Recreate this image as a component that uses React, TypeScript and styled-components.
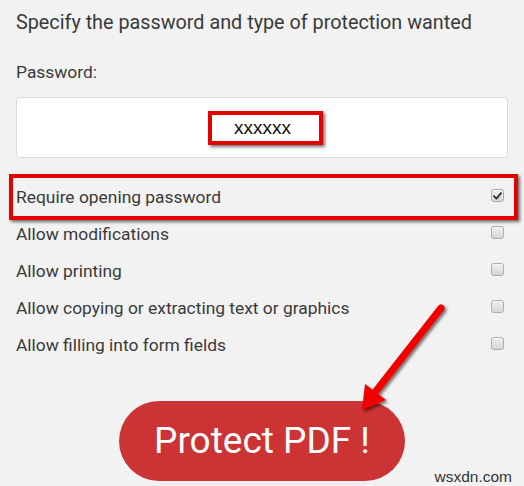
import React from "react";
import styled, { createGlobalStyle } from "styled-components";

const Global = createGlobalStyle`
  html, body { margin: 0; padding: 0; background: #f2f2f2; }
  body { font-family: Roboto, "Noto Sans", sans-serif; color: #333; }
`;

const Page = styled.div`
  position: relative;
  width: 524px;
  height: 486px;
  overflow: hidden;
  background: #f2f2f2;
  padding: 11px 16px 0 16px;
  box-sizing: border-box;
  display: flex;
  flex-direction: column;
`;

const Heading = styled.div`
  font-size: 19.8px;
  line-height: 24px;
  color: #3a3a3a;
  white-space: nowrap;
`;

const Label = styled.div`
  margin-top: 27px;
  font-size: 17.4px;
  line-height: 20px;
  color: #3a3a3a;
`;

const InputBox = styled.div`
  margin-top: 15px;
  height: 61px;
  box-sizing: border-box;
  background: #fff;
  border: 1px solid #d9d9d9;
  border-radius: 4px;
  display: flex;
  align-items: center;
  justify-content: center;
`;

const Marked = styled.span`
  display: inline-flex;
  align-items: center;
  justify-content: center;
  box-sizing: border-box;
  width: 115px;
  height: 34px;
  margin-left: 7px;
  border: 4px solid #e60000;
  box-shadow: 2px 2px 3px rgba(0, 0, 0, 0.55);
  font-family: "Liberation Sans", Arial, sans-serif;
  font-size: 19px;
  color: #111;
  padding-right: 6px;
`;

const Options = styled.div`
  margin-top: 20px;
  display: flex;
  flex-direction: column;
`;

const Row = styled.div<{ $highlight?: boolean }>`
  position: relative;
  height: 37px;
  display: flex;
  align-items: center;
  justify-content: space-between;
  padding-right: 4px;
  font-size: 17.4px;
  color: #3a3a3a;
  ${(p) =>
    p.$highlight &&
    `
    &::after {
      content: "";
      position: absolute;
      left: -7px;
      right: -10px;
      top: -4px;
      bottom: -5px;
      border: 4px solid #e60000;
      box-shadow: 2px 2px 3px rgba(0,0,0,0.55);
      pointer-events: none;
    }
  `}
`;

const Check = styled.span<{ $checked?: boolean }>`
  width: 13px;
  height: 13px;
  box-sizing: border-box;
  border: 1px solid #adadad;
  border-radius: 3px;
  background: linear-gradient(#efefef, #d6d6d6);
  box-shadow: inset 0 1px 1px rgba(255, 255, 255, 0.8), 0 0 1px rgba(0,0,0,0.1);
  display: flex;
  align-items: center;
  justify-content: center;
  margin-top: -2px;
`;

const ButtonWrap = styled.div`
  margin-top: 38px;
  display: flex;
  justify-content: center;
`;

const Button = styled.button`
  width: 286px;
  height: 80px;
  border: none;
  border-radius: 40px;
  background: #cb3334;
  color: #fff;
  font-family: Roboto, "Noto Sans", sans-serif;
  font-size: 37px;
  padding: 0 0 2px 0;
  cursor: pointer;
`;

const Watermark = styled.div`
  position: absolute;
  right: 12px;
  bottom: 0px;
  font-family: "Liberation Sans", Arial, sans-serif;
  font-size: 15.5px;
  color: #333;
`;

const ArrowSvg = styled.svg`
  position: absolute;
  left: 0;
  top: 0;
  pointer-events: none;
`;

const options = [
  { label: "Require opening password", checked: true },
  { label: "Allow modifications" },
  { label: "Allow printing" },
  { label: "Allow copying or extracting text or graphics" },
  { label: "Allow filling into form fields" },
];

export default function App() {
  return (
    <>
      <Global />
      <Page>
        <Heading>Specify the password and type of protection wanted</Heading>
        <Label>Password:</Label>
        <InputBox>
          <Marked>xxxxxx</Marked>
        </InputBox>
        <Options>
          {options.map((o, i) => (
            <Row key={i} $highlight={i === 0}>
              <span>{o.label}</span>
              <Check $checked={o.checked}>
                {o.checked && (
                  <svg width="9" height="8" viewBox="0 0 9 8">
                    <path d="M1 4.2 L3.4 6.6 L8 1.2" fill="none" stroke="#333" strokeWidth="1.9" strokeLinecap="round" strokeLinejoin="round" />
                  </svg>
                )}
              </Check>
            </Row>
          ))}
        </Options>
        <ButtonWrap>
          <Button>Protect PDF !</Button>
        </ButtonWrap>
        <ArrowSvg width="524" height="486" viewBox="0 0 524 486">
          <defs>
            <filter id="sh" x="-20%" y="-20%" width="140%" height="140%">
              <feDropShadow dx="2" dy="2" stdDeviation="1.5" floodColor="#000" floodOpacity="0.55" />
            </filter>
          </defs>
          <g filter="url(#sh)">
            <line x1="441" y1="308" x2="376" y2="391" stroke="#f20000" strokeWidth="7" strokeLinecap="round" />
            <polygon points="362,410 365,384 386,400" fill="#f20000" />
          </g>
        </ArrowSvg>
        <Watermark>wsxdn.com</Watermark>
      </Page>
    </>
  );
}
